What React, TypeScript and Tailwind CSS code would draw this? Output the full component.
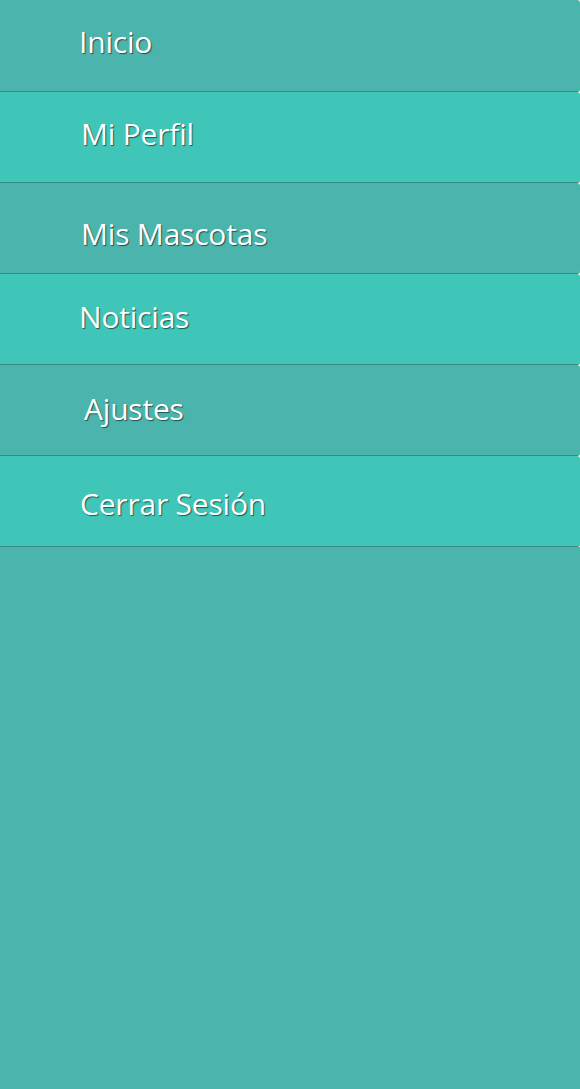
const items = [
  { label: "Inicio", bg: "bg-[#4bb5ad]", box: "h-[92px] pt-[27px] pl-[79px]" },
  { label: "Mi Perfil", bg: "bg-[#3fc6b9]", box: "h-[91px] pt-[27px] pl-[81px]" },
  { label: "Mis Mascotas", bg: "bg-[#4bb5ad]", box: "h-[91px] pt-[36px] pl-[81px]" },
  { label: "Noticias", bg: "bg-[#3fc6b9]", box: "h-[91px] pt-[28px] pl-[79px]" },
  { label: "Ajustes", bg: "bg-[#4bb5ad]", box: "h-[91px] pt-[29px] pl-[84px]" },
  { label: "Cerrar Sesión", bg: "bg-[#3fc6b9]", box: "h-[91px] pt-[33px] pl-[80px]" },
];

export default function App() {
  return (
    <div className="w-[580px] min-h-[1089px] flex flex-col bg-[#4bb5ad] font-['Open_Sans',sans-serif]">
      {/* Menu */}
      <nav className="flex flex-col bg-white">
        {items.map((item) => (
          <a
            key={item.label}
            href="#"
            className={`border-b border-[#3a8a84] rounded-r-[3px] text-white text-[30px] leading-[30px] tracking-[-0.2px] [text-shadow:1px_1px_1px_rgba(0,0,0,0.55)] ${item.bg} ${item.box}`}
          >
            {item.label}
          </a>
        ))}
      </nav>
      <div className="flex-1" />
    </div>
  );
}
